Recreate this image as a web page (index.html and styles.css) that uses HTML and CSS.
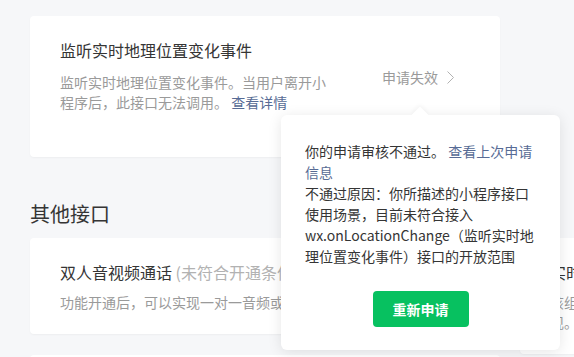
FILE: index.html
```html
<!DOCTYPE html>
<html lang="zh-CN">
<head>
    <meta charset="UTF-8">
    <meta name="viewport" content="width=device-width, initial-scale=1.0">
    <title>接口设置</title>
    <link rel="stylesheet" href="styles.css">
</head>
<body>
    <div class="page">
        <div class="card card-tall">
            <div class="card-body">
                <h3 class="card-title">监听实时地理位置变化事件</h3>
                <p class="card-desc">监听实时地理位置变化事件。当用户离开小程序后，此接口无法调用。 <a class="link" href="#">查看详情</a></p>
            </div>
            <div class="status">
                <span>申请失效</span>
                <svg class="chevron" width="7" height="13" viewBox="0 0 7 13"><path d="M0.5 0.5 L6.5 6.5 L0.5 12.5" fill="none" stroke="#b2b2b2" stroke-width="1"/></svg>
            </div>
        </div>

        <h2 class="section-title">其他接口</h2>

        <div class="columns">
            <div class="column">
                <div class="card">
                    <div class="card-body">
                        <h3 class="card-title">双人音视频通话 <span class="muted">(未符合开通条件)</span></h3>
                        <p class="card-desc card-desc-near">功能开通后，可以实现一对一音频或视频通话。</p>
                    </div>
                </div>
                <div class="card">
                    <div class="card-body">
                        <h3 class="card-title">多人音视频对话</h3>
                        <p class="card-desc card-desc-near">功能开通后，可以实现多人音频或视频对话。</p>
                    </div>
                </div>
            </div>
            <div class="column">
                <div class="card">
                    <div class="card-body narrow">
                        <h3 class="card-title">实时播放音视频流</h3>
                        <p class="card-desc card-desc-near">该组件可以实时播放音视频流，便于快速实现。</p>
                    </div>
                </div>
            </div>
        </div>

        <div class="popover">
            <p>你的申请审核不通过。 <a class="link" href="#">查看上次申请信息</a></p>
            <p>不通过原因：你所描述的小程序接口使用场景，目前未符合接入wx.onLocationChange（监听实时地理位置变化事件）接口的开放范围</p>
            <div class="popover-actions">
                <button type="button" class="btn-primary">重新申请</button>
            </div>
        </div>
    </div>
</body>
</html>
```

FILE: styles.css
```css
html, body {
    overflow: hidden;
}
body {
    margin: 0;
    background-color: #f6f7f9;
    font-family: "Noto Sans CJK SC", "Noto Sans", sans-serif;
    color: #353535;
}
.page {
    position: relative;
    padding: 16px 0 0 30px;
    width: 960px;
}
.card {
    display: flex;
    align-items: center;
    width: 470px;
    box-sizing: border-box;
    padding: 22px 30px;
    background-color: #fff;
    border-radius: 4px;
    box-shadow: 0 1px 2px rgba(0, 0, 0, 0.04);
}
.card-tall {
    padding-bottom: 45px;
}
.card-body {
    flex: 1;
    min-width: 0;
}
.narrow {
    max-width: 272px;
}
.card-title {
    margin: 0;
    font-size: 16px;
    font-weight: normal;
    line-height: 24px;
    color: #353535;
    white-space: nowrap;
}
.muted {
    color: #b2b2b2;
}
.card-desc {
    margin: 10px 0 0;
    font-size: 14px;
    line-height: 20px;
    color: #9a9a9a;
}
.card-desc-near {
    margin-top: 8px;
}
.link {
    color: #576b95;
    text-decoration: none;
}
.status {
    display: flex;
    align-items: center;
    margin: 0 16px 0 48px;
    padding-top: 4px;
    font-size: 14px;
    line-height: 20px;
    color: #9a9a9a;
    white-space: nowrap;
}
.chevron {
    margin-left: 9px;
}
.section-title {
    margin: 43px 0 10px;
    font-size: 20px;
    font-weight: normal;
    line-height: 28px;
    color: #353535;
}
.columns {
    display: flex;
    align-items: flex-start;
    gap: 20px;
}
.column {
    display: flex;
    flex-direction: column;
    gap: 21px;
}
.popover {
    position: absolute;
    left: 281px;
    top: 115px;
    width: 279px;
    box-sizing: border-box;
    padding: 26px 24px 23px;
    background-color: #fff;
    border-radius: 6px;
    box-shadow: 0 2px 14px rgba(0, 0, 0, 0.1);
    font-size: 14px;
    line-height: 21px;
    color: #353535;
}
.popover::before {
    content: "";
    position: absolute;
    left: 133px;
    top: -6px;
    width: 12px;
    height: 12px;
    background-color: #fff;
    transform: rotate(45deg);
    box-shadow: -2px -2px 4px rgba(0, 0, 0, 0.03);
}
.popover p {
    position: relative;
    margin: 0;
}
.popover-actions {
    margin-top: 24px;
    text-align: center;
}
.btn-primary {
    width: 96px;
    height: 36px;
    border: none;
    border-radius: 4px;
    background-color: #07c160;
    color: #fff;
    font-family: inherit;
    font-size: 14px;
    font-weight: bold;
    cursor: pointer;
}
```
